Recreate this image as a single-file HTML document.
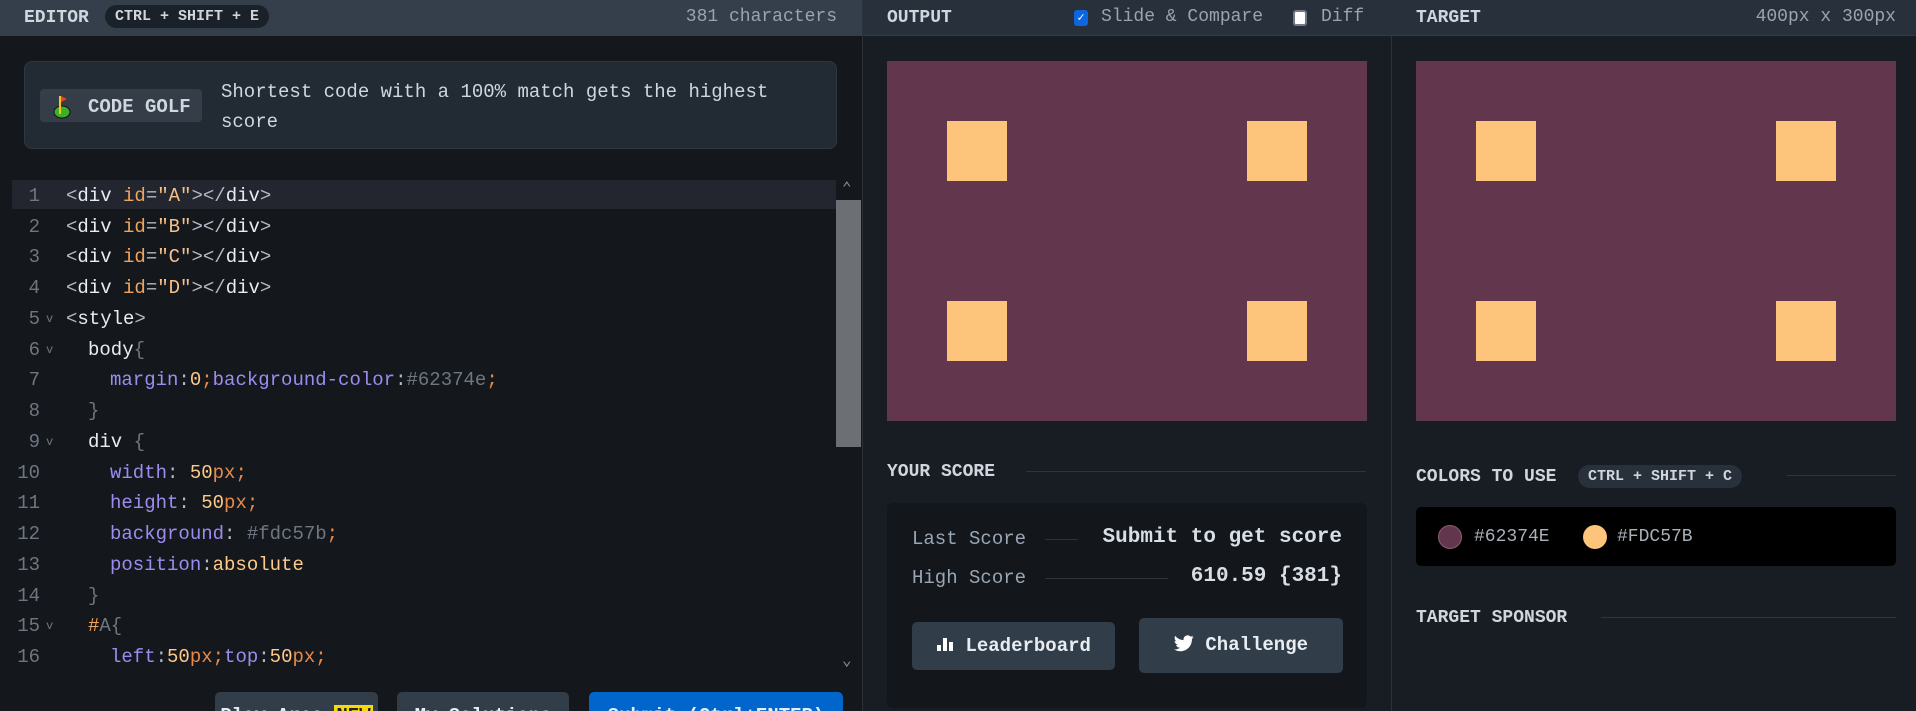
<!DOCTYPE html>
<html style="width:1916px;height:711px;overflow:hidden"><head><meta charset="utf-8"><style>
*{box-sizing:border-box;margin:0;padding:0}
body{width:1916px;height:711px;overflow:hidden;background:#181c23;font-family:"Liberation Mono",monospace;color:#c9d1d9;position:relative}
.abs{position:absolute}
.hdr{position:absolute;top:0;height:36px;}
.h{font-weight:bold;font-size:18px;color:#d0d6de;white-space:nowrap}
.mut{color:#9aa4b0;font-size:18px;white-space:nowrap}
.badge{background:#1b2129;border-radius:12px;color:#d0d6de;font-weight:bold;font-size:15px;padding:0 10px;height:23px;line-height:23px}
.code{position:absolute;left:0;font-size:19px;white-space:pre;height:31px;line-height:31px}
.ln{position:absolute;width:40px;text-align:right;color:#6e7681}
.fd{position:absolute;left:46px;color:#6e7681;font-size:12px}
.t{color:#b1b9c4}.w{color:#e6edf3}.a{color:#f0a45c}.s{color:#f7c08a}.p{color:#9d8cf0}.n{color:#ffc98a}.u{color:#e8894a}.g{color:#6e7681}
.sq{position:absolute;width:60px;height:60px;background:#fdc57b}
.line{position:absolute;height:1px;background:#2c343e}
.btn{position:absolute;background:#323d4a;border-radius:5px;color:#e8edf2;font-weight:bold;font-size:19px;text-align:center;overflow:hidden}
</style></head><body>
<div class="abs" style="left:0;top:0;width:862px;height:711px;background:#14181d"></div>
<div class="hdr" style="left:0;width:862px;background:#343f4b"></div>
<div class="abs h" style="left:24px;top:8px">EDITOR</div>
<div class="abs badge" style="left:105px;top:5px">CTRL + SHIFT + E</div>
<div class="abs mut" style="right:1079px;top:7px">381 characters</div>

<div class="abs" style="left:24px;top:61px;width:813px;height:88px;background:#222a34;border:1px solid #2e3844;border-radius:8px"></div>
<div class="abs" style="left:40px;top:89px;width:162px;height:33px;background:#343d48;border-radius:4px"></div>
<svg class="abs" style="left:50px;top:93px" width="24" height="26" viewBox="0 0 24 26"><ellipse cx="12" cy="19" rx="8" ry="6" fill="#3fae2a" stroke="#111" stroke-width="1"/><rect x="9" y="3" width="2" height="18" fill="#f5c518"/><path d="M11 3 L17 6 L11 9Z" fill="#e8412c"/></svg>
<div class="abs h" style="left:88px;top:96px;font-size:19px">CODE GOLF</div>
<div class="abs" style="left:221px;top:77px;font-size:19px;line-height:30px;color:#d0d6de;width:580px">Shortest code with a 100% match gets the highest score</div>

<div class="abs" style="left:12px;top:180px;width:824px;height:29px;background:#23252f"></div>
<div class="abs" style="left:836px;top:180px;width:26px;height:490px;background:#14181d"></div>
<div class="abs" style="left:836px;top:200px;width:25px;height:247px;background:#6c7074"></div>
<div class="abs" style="left:842px;top:178px;color:#8a9099;font-size:16px">&#8963;</div>
<div class="abs" style="left:842px;top:650px;color:#8a9099;font-size:16px">&#8964;</div>

<div class="code" style="top:181px"><span class="ln">1</span><span style="position:absolute;left:66px"><span class="t">&lt;</span><span class="w">div</span> <span class="a">id</span><span class="t">=</span><span class="s">"A"</span><span class="t">&gt;&lt;/</span><span class="w">div</span><span class="t">&gt;</span></span></div>
<div class="code" style="top:212px"><span class="ln">2</span><span style="position:absolute;left:66px"><span class="t">&lt;</span><span class="w">div</span> <span class="a">id</span><span class="t">=</span><span class="s">"B"</span><span class="t">&gt;&lt;/</span><span class="w">div</span><span class="t">&gt;</span></span></div>
<div class="code" style="top:242px"><span class="ln">3</span><span style="position:absolute;left:66px"><span class="t">&lt;</span><span class="w">div</span> <span class="a">id</span><span class="t">=</span><span class="s">"C"</span><span class="t">&gt;&lt;/</span><span class="w">div</span><span class="t">&gt;</span></span></div>
<div class="code" style="top:273px"><span class="ln">4</span><span style="position:absolute;left:66px"><span class="t">&lt;</span><span class="w">div</span> <span class="a">id</span><span class="t">=</span><span class="s">"D"</span><span class="t">&gt;&lt;/</span><span class="w">div</span><span class="t">&gt;</span></span></div>
<div class="code" style="top:304px"><span class="ln">5</span><span class="fd">v</span><span style="position:absolute;left:66px"><span class="t">&lt;</span><span class="w">style</span><span class="t">&gt;</span></span></div>
<div class="code" style="top:335px"><span class="ln">6</span><span class="fd">v</span><span style="position:absolute;left:88px"><span class="w">body</span><span class="g">{</span></span></div>
<div class="code" style="top:365px"><span class="ln">7</span><span style="position:absolute;left:110px"><span class="p">margin</span><span class="t">:</span><span class="n">0</span><span class="u">;</span><span class="p">background-color</span><span class="t">:</span><span class="g">#62374e</span><span class="u">;</span></span></div>
<div class="code" style="top:396px"><span class="ln">8</span><span style="position:absolute;left:88px"><span class="g">}</span></span></div>
<div class="code" style="top:427px"><span class="ln">9</span><span class="fd">v</span><span style="position:absolute;left:88px"><span class="w">div</span> <span class="g">{</span></span></div>
<div class="code" style="top:458px"><span class="ln">10</span><span style="position:absolute;left:110px"><span class="p">width</span><span class="t">:</span> <span class="n">50</span><span class="u">px;</span></span></div>
<div class="code" style="top:488px"><span class="ln">11</span><span style="position:absolute;left:110px"><span class="p">height</span><span class="t">:</span> <span class="n">50</span><span class="u">px;</span></span></div>
<div class="code" style="top:519px"><span class="ln">12</span><span style="position:absolute;left:110px"><span class="p">background</span><span class="t">:</span> <span class="g">#fdc57b</span><span class="u">;</span></span></div>
<div class="code" style="top:550px"><span class="ln">13</span><span style="position:absolute;left:110px"><span class="p">position</span><span class="t">:</span><span class="n">absolute</span></span></div>
<div class="code" style="top:581px"><span class="ln">14</span><span style="position:absolute;left:88px"><span class="g">}</span></span></div>
<div class="code" style="top:611px"><span class="ln">15</span><span class="fd">v</span><span style="position:absolute;left:88px"><span class="a">#</span><span class="g">A{</span></span></div>
<div class="code" style="top:642px"><span class="ln">16</span><span style="position:absolute;left:110px"><span class="p">left</span><span class="t">:</span><span class="n">50</span><span class="u">px;</span><span class="p">top</span><span class="t">:</span><span class="n">50</span><span class="u">px;</span></span></div>

<div class="btn" style="left:215px;top:692px;width:163px;height:19px;padding-top:12px;line-height:24px;border-radius:5px 5px 0 0">Play Area <span style="background:#f5d90a;color:#222;padding:0 2px">NEW</span></div>
<div class="btn" style="left:397px;top:692px;width:172px;height:19px;padding-top:12px;line-height:24px;border-radius:5px 5px 0 0">My Solutions</div>
<div class="btn" style="left:589px;top:692px;width:254px;height:19px;padding-top:12px;line-height:24px;background:#0066cc;border-radius:5px 5px 0 0">Submit (Ctrl+ENTER)</div>

<div class="abs" style="left:862px;top:0;width:1px;height:711px;background:#2a313a"></div>
<div class="abs" style="left:1391px;top:0;width:1px;height:711px;background:#2a313a"></div>
<div class="hdr" style="left:863px;width:1053px;background:#28313b;border-bottom:1px solid #313a45"></div>
<div class="abs h" style="left:887px;top:8px">OUTPUT</div>
<div class="abs" style="left:1074px;top:10px;width:14px;height:16px;background:#0d66e0;border-radius:3px;color:#fff;font-size:12px;text-align:center;line-height:16px">✓</div>
<div class="abs mut" style="left:1101px;top:7px">Slide &amp; Compare</div>
<div class="abs" style="left:1293px;top:10px;width:14px;height:16px;background:#fff;border:2px solid #778;border-radius:3px"></div>
<div class="abs mut" style="left:1321px;top:7px">Diff</div>
<div class="abs h" style="left:1416px;top:8px">TARGET</div>
<div class="abs mut" style="right:20px;top:7px">400px x 300px</div>

<div class="abs" style="left:887px;top:61px;width:480px;height:360px;background:#62374e"></div>
<div class="sq" style="left:947px;top:121px"></div><div class="sq" style="left:1247px;top:121px"></div>
<div class="sq" style="left:947px;top:301px"></div><div class="sq" style="left:1247px;top:301px"></div>
<div class="abs" style="left:1416px;top:61px;width:480px;height:360px;background:#62374e"></div>
<div class="sq" style="left:1476px;top:121px"></div><div class="sq" style="left:1776px;top:121px"></div>
<div class="sq" style="left:1476px;top:301px"></div><div class="sq" style="left:1776px;top:301px"></div>

<div class="abs h" style="left:887px;top:462px">YOUR SCORE</div>
<div class="line" style="left:1026px;top:471px;width:340px"></div>
<div class="abs" style="left:887px;top:503px;width:480px;height:205px;background:#13171c;border-radius:6px"></div>
<div class="abs" style="left:912px;top:528px;font-size:19px;color:#9aa6b4">Last Score</div>
<div class="line" style="left:1045px;top:539px;width:33px"></div>
<div class="abs" style="right:574px;top:526px;font-size:21px;font-weight:bold;color:#d8dee6">Submit to get score</div>
<div class="abs" style="left:912px;top:567px;font-size:19px;color:#9aa6b4">High Score</div>
<div class="line" style="left:1045px;top:578px;width:123px"></div>
<div class="abs" style="right:574px;top:565px;font-size:21px;font-weight:bold;color:#d8dee6">610.59 {381}</div>
<div class="btn" style="left:912px;top:622px;width:203px;height:48px;line-height:48px"><svg width="18" height="16" viewBox="0 0 18 16" style="vertical-align:-1px"><rect x="1" y="9" width="4" height="6" fill="#fff"/><rect x="7" y="2" width="4" height="13" fill="#fff"/><rect x="13" y="6" width="4" height="9" fill="#fff"/></svg> Leaderboard</div>
<div class="btn" style="left:1139px;top:618px;width:204px;height:55px;line-height:55px"><svg width="20" height="17" viewBox="0 0 24 20" style="vertical-align:-2px"><path fill="#fff" d="M23.6 2.4a9.7 9.7 0 0 1-2.8.8 4.9 4.9 0 0 0 2.1-2.7 9.8 9.8 0 0 1-3.1 1.2A4.9 4.9 0 0 0 11.5 6 13.9 13.9 0 0 1 1.4.9a4.9 4.9 0 0 0 1.5 6.5A4.9 4.9 0 0 1 .7 6.8a4.9 4.9 0 0 0 3.9 4.8 4.9 4.9 0 0 1-2.2.1 4.9 4.9 0 0 0 4.6 3.4A9.8 9.8 0 0 1 0 17.1 13.9 13.9 0 0 0 7.5 19.3c9 0 14-7.5 14-14v-.6a10 10 0 0 0 2.1-2.3z"/></svg> Challenge</div>

<div class="abs h" style="left:1416px;top:467px">COLORS TO USE</div>
<div class="abs badge" style="left:1578px;top:465px;background:#28313b">CTRL + SHIFT + C</div>
<div class="line" style="left:1787px;top:475px;width:109px"></div>
<div class="abs" style="left:1416px;top:507px;width:480px;height:59px;background:#000;border-radius:5px"></div>
<div class="abs" style="left:1438px;top:525px;width:24px;height:24px;border-radius:50%;background:#62374e;border:1px solid #8a6070"></div>
<div class="abs" style="left:1474px;top:527px;font-size:18px;color:#a8b0ba">#62374E</div>
<div class="abs" style="left:1583px;top:525px;width:24px;height:24px;border-radius:50%;background:#fdc57b"></div>
<div class="abs" style="left:1617px;top:527px;font-size:18px;color:#a8b0ba">#FDC57B</div>
<div class="abs h" style="left:1416px;top:608px">TARGET SPONSOR</div>
<div class="line" style="left:1601px;top:617px;width:295px"></div>
</body></html>
